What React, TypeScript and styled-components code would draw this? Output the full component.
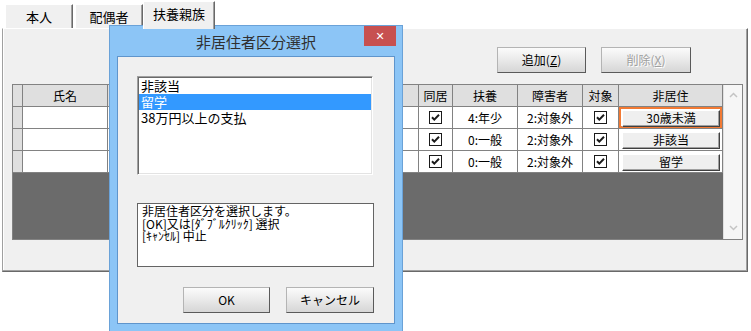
import React from 'react';
import styled, { createGlobalStyle } from 'styled-components';

interface IDependent {
  name: string;
  relation: string;
  kind: string;
  birth: string;
  together: boolean;
  fuyou: string;
  shogai: string;
  target: boolean;
  hikyoju: string;
}

// 氏名・続柄などはダイアログの下に隠れているので空のまま
const dependents: IDependent[] = [
  { name: '', relation: '', kind: '', birth: '', together: true, fuyou: '4:年少', shogai: '2:対象外', target: true, hikyoju: '30歳未満' },
  { name: '', relation: '', kind: '', birth: '', together: true, fuyou: '0:一般', shogai: '2:対象外', target: true, hikyoju: '非該当' },
  { name: '', relation: '', kind: '', birth: '', together: true, fuyou: '0:一般', shogai: '2:対象外', target: true, hikyoju: '留学' },
];

const columns = [
  { key: 'rowHead', title: '', width: 10 },
  { key: 'name', title: '氏名', width: 85 },
  { key: 'relation', title: '', width: 118 },
  { key: 'kind', title: '', width: 115 },
  { key: 'birth', title: '', width: 78 },
  { key: 'together', title: '同居', width: 34 },
  { key: 'fuyou', title: '扶養', width: 65 },
  { key: 'shogai', title: '障害者', width: 65 },
  { key: 'target', title: '対象', width: 36 },
  { key: 'hikyoju', title: '非居住', width: 104 },
];

const options = ['非該当', '留学', '38万円以上の支払'];

const CheckMark = () => (
  <svg width='13' height='13' viewBox='0 0 13 13'>
    <rect x='0.5' y='0.5' width='12' height='12' fill='#fff' stroke='#1a1a1a' />
    <path d='M3 6.2 L5.3 8.6 L10 3.8' fill='none' stroke='#1a1a1a' strokeWidth='2' />
  </svg>
);

const Chevron = ({ up }: { up: boolean }) => (
  <svg width='9' height='6' viewBox='0 0 9 6'>
    <path d={up ? 'M1 5 L4.5 1.5 L8 5' : 'M1 1 L4.5 4.5 L8 1'} fill='none' stroke='#c4c4c4' strokeWidth='1.5' />
  </svg>
);

const App = () => {
  const tabs = ['本人', '配偶者', '扶養親族'];
  const activeTab = 2;
  const selectedOption = 1;

  return (
    <Screen>
      <GlobalStyle />
      <TabStrip>
        {tabs.map((t, i) => (
          <Tab key={t} $active={i === activeTab} $width={i === 2 ? 72 : 68}>
            {t}
          </Tab>
        ))}
      </TabStrip>
      <Panel>
        <Toolbar>
          <PushButton $width={89}>
            追加(<u>Z</u>)
          </PushButton>
          <PushButton $width={90} $disabled>
            削除(<u>X</u>)
          </PushButton>
        </Toolbar>
        <GridBox>
          <TableArea>
            <GridTable>
              {columns.map((c) => (
                <HeadCell key={c.key}>{c.title}</HeadCell>
              ))}
              {dependents.map((d, idx) => (
                <React.Fragment key={idx}>
                  <RowHeadCell />
                  <Cell>{d.name}</Cell>
                  <Cell>{d.relation}</Cell>
                  <Cell>{d.kind}</Cell>
                  <Cell>{d.birth}</Cell>
                  <Cell>{d.together && <CheckMark />}</Cell>
                  <Cell>{d.fuyou}</Cell>
                  <Cell>{d.shogai}</Cell>
                  <Cell>{d.target && <CheckMark />}</Cell>
                  <ButtonCell $focused={idx === 0}>
                    <CellButton>{d.hikyoju}</CellButton>
                  </ButtonCell>
                </React.Fragment>
              ))}
            </GridTable>
          </TableArea>
          <ScrollBar>
            <Chevron up />
            <Chevron up={false} />
          </ScrollBar>
        </GridBox>
      </Panel>

      <Dialog>
        <TitleBar>
          <span />
          <Title>非居住者区分選択</Title>
          <CloseButton>✕</CloseButton>
        </TitleBar>
        <Client>
          <ListBox>
            {options.map((o, i) => (
              <ListItem key={o} $selected={i === selectedOption}>
                {o}
              </ListItem>
            ))}
          </ListBox>
          <Description>
            {'非居住者区分を選択します。\n[OK]又は[ﾀﾞﾌﾞﾙｸﾘｯｸ] 選択\n[ｷｬﾝｾﾙ] 中止'}
          </Description>
          <DialogButtons>
            <PushButton $width={87}>OK</PushButton>
            <PushButton $width={88}>キャンセル</PushButton>
          </DialogButtons>
        </Client>
      </Dialog>
    </Screen>
  );
};

const GlobalStyle = createGlobalStyle`
  html, body {
    margin: 0;
    padding: 0;
    width: 751px;
    height: 331px;
    overflow: hidden;
    background: #ffffff;
  }
  body {
    font-family: "Noto Sans CJK JP", "Liberation Sans", sans-serif;
    font-size: 12px;
    color: #000;
  }
`;

const Screen = styled.div`
  position: relative;
  width: 751px;
  height: 331px;
`;

const TabStrip = styled.div`
  display: flex;
  align-items: flex-end;
  gap: 2px;
  height: 28px;
  padding-left: 5px;
`;

const Tab = styled.div<{ $active: boolean; $width: number }>`
  box-sizing: border-box;
  width: ${(p) => p.$width}px;
  height: ${(p) => (p.$active ? 28 : 24)}px;
  margin-left: ${(p) => (p.$active ? -2 : 0)}px;
  margin-bottom: ${(p) => (p.$active ? -1 : 0)}px;
  position: relative;
  z-index: ${(p) => (p.$active ? 1 : 0)};
  display: flex;
  align-items: center;
  justify-content: center;
  padding-bottom: ${(p) => (p.$active ? 3 : 0)}px;
  background: #f0f0f0;
  border-top: 1px solid #ffffff;
  border-left: 1px solid #ffffff;
  border-right: 1px solid #696969;
  box-shadow: inset -1px 0 0 #a0a0a0;
  font-size: 13px;
  line-height: 16px;
`;

const Panel = styled.div`
  box-sizing: border-box;
  width: 746px;
  height: 244px;
  margin-left: 2px;
  padding: 18px 56px 0 9px;
  background: #f0f0f0;
  border: 1px solid;
  border-color: #ffffff #696969 #696969 #a0a0a0;
  box-shadow: inset -1px -1px 0 #a0a0a0, inset 1px 0 0 #ffffff;
`;

const Toolbar = styled.div`
  display: flex;
  justify-content: flex-end;
  gap: 15px;
  height: 26px;
`;

const PushButton = styled.div<{ $width: number; $disabled?: boolean }>`
  box-sizing: border-box;
  width: ${(p) => p.$width}px;
  height: 26px;
  display: flex;
  align-items: center;
  justify-content: center;
  background: linear-gradient(#fbfbfb, #e9e9e9 50%, #d6d6d6);
  border: 1px solid;
  border-color: #b4b4b4 #5a5a5a #5a5a5a #b4b4b4;
  font-size: 12px;
  line-height: 14px;
  color: ${(p) => (p.$disabled ? '#a0a0a0' : '#000')};
  text-shadow: ${(p) => (p.$disabled ? '1px 1px 0 #ffffff' : 'none')};

  u {
    text-decoration-thickness: 1px;
    text-underline-offset: 1px;
  }
`;

const GridBox = styled.div`
  box-sizing: border-box;
  display: flex;
  width: 731px;
  height: 156px;
  margin-top: 11px;
  border: 1px solid #828282;
`;

const TableArea = styled.div`
  width: 710px;
  height: 100%;
  background: #6b6b6b;
`;

const GridTable = styled.div`
  display: grid;
  grid-template-columns: ${columns.map((c) => `${c.width}px`).join(' ')};
  grid-auto-rows: 22px;
`;

const Cell = styled.div`
  box-sizing: border-box;
  display: flex;
  align-items: center;
  justify-content: center;
  overflow: hidden;
  white-space: nowrap;
  background: #ffffff;
  border-right: 1px solid #828282;
  border-bottom: 1px solid #828282;
  font-size: 12px;
  line-height: 14px;
`;

const HeadCell = styled(Cell)`
  background: #dfdfdf;
`;

const RowHeadCell = styled(Cell)`
  background: #dfdfdf;
`;

const ButtonCell = styled(Cell)<{ $focused: boolean }>`
  padding: 2px 2px 1px 3px;
  box-shadow: ${(p) => (p.$focused ? 'inset 0 0 0 2px #f27a34' : 'none')};
`;

const CellButton = styled.div`
  box-sizing: border-box;
  width: 100%;
  height: 17px;
  display: flex;
  align-items: center;
  justify-content: center;
  background: #efefef;
  border: 1px solid;
  border-color: #ffffff #404040 #404040 #ffffff;
  box-shadow: inset -1px -1px 0 #a0a0a0;
  font-size: 12px;
  line-height: 14px;
`;

const ScrollBar = styled.div`
  box-sizing: border-box;
  width: 19px;
  height: 100%;
  display: flex;
  flex-direction: column;
  justify-content: space-between;
  align-items: center;
  padding: 7px 0 8px;
  background: #f6f6f6;
  border-left: 1px solid #e0e0e0;
`;

const Dialog = styled.div`
  position: absolute;
  left: 109px;
  top: 25px;
  box-sizing: border-box;
  width: 294px;
  height: 308px;
  display: flex;
  flex-direction: column;
  padding: 0 7px 8px;
  background: #8cc5f6;
  border: 1px solid #6aa2d8;
`;

const TitleBar = styled.div`
  display: grid;
  grid-template-columns: 31px 1fr 31px;
  height: 30px;
`;

const Title = styled.div`
  display: flex;
  align-items: center;
  justify-content: center;
  font-size: 15px;
  line-height: 18px;
  color: #303030;
  padding-top: 1px;
`;

const CloseButton = styled.div`
  height: 20px;
  display: flex;
  align-items: center;
  justify-content: center;
  background: #c75050;
  color: #ffffff;
  font-family: "DejaVu Sans", sans-serif;
  font-size: 11px;
  font-weight: bold;
  margin-right: -1px;
`;

const Client = styled.div`
  box-sizing: border-box;
  flex: 1;
  display: flex;
  flex-direction: column;
  padding: 19px 20px 0 19px;
  background: #f0f0f0;
  border: 1px solid #5f95cc;
`;

const ListBox = styled.div`
  box-sizing: border-box;
  width: 236px;
  height: 99px;
  padding: 1px;
  background: #ffffff;
  border: 1px solid;
  border-color: #a0a0a0 #ffffff #ffffff #a0a0a0;
  box-shadow: inset 1px 1px 0 #696969, inset -1px -1px 0 #e3e3e3;
`;

const ListItem = styled.div<{ $selected: boolean }>`
  height: 16px;
  padding-left: 2px;
  font-size: 13px;
  line-height: 16px;
  white-space: nowrap;
  background: ${(p) => (p.$selected ? '#3399ff' : 'transparent')};
  color: ${(p) => (p.$selected ? '#ffffff' : '#000')};
`;

const Description = styled.div`
  box-sizing: border-box;
  width: 237px;
  height: 64px;
  margin-top: 28px;
  padding: 1px 4px;
  background: #ffffff;
  border: 1px solid #646464;
  font-size: 12px;
  line-height: 12.5px;
  white-space: pre-line;
`;

const DialogButtons = styled.div`
  display: flex;
  justify-content: flex-end;
  gap: 16px;
  width: 237px;
  margin-top: 20px;
`;

export default App;
